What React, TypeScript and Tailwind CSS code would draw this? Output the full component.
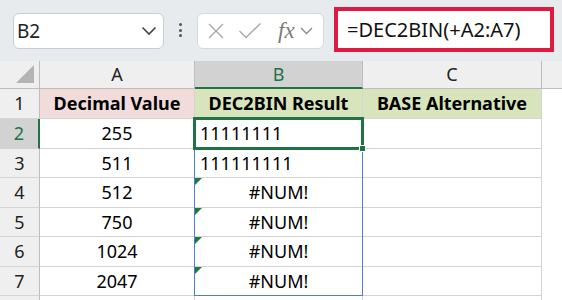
import React from "react";

function Corner() {
  return (
    <div className="relative bg-[#efefef] border-r border-b border-r-[#bdbdbd] border-b-[#bdbdbd]">
      <svg className="absolute right-[4px] bottom-[4px]" width="20" height="20" viewBox="0 0 20 20">
        <polygon points="19,1 19,19 1,19" fill="#b4b4b4" />
      </svg>
    </div>
  );
}

function ErrTri() {
  return (
    <svg className="absolute left-0 top-0" width="7" height="7" viewBox="0 0 7 7">
      <polygon points="0,0 7,0 0,7" fill="#1e7b3c" />
    </svg>
  );
}

export default function App() {
  const font = { fontFamily: '"Noto Sans", "Open Sans", sans-serif' };
  const rows = [
    { n: "1", a: "Decimal Value", b: "DEC2BIN Result", c: "BASE Alternative", head: true },
    { n: "2", a: "255", b: "11111111", left: true },
    { n: "3", a: "511", b: "111111111", left: true },
    { n: "4", a: "512", b: "#NUM!", err: true },
    { n: "5", a: "750", b: "#NUM!", err: true },
    { n: "6", a: "1024", b: "#NUM!", err: true },
    { n: "7", a: "2047", b: "#NUM!", err: true },
    { n: "", a: "", b: "" },
  ];
  const gl = "border-r border-b border-[#d4d4d4]";
  const rh = "flex items-center justify-center bg-[#efefef] border-r border-b border-r-[#bdbdbd] border-b-[#d4d4d4] text-[18px] text-[#222]";
  return (
    <div className="relative w-[562px] h-[300px] overflow-hidden bg-white" style={font}>
      {/* toolbar */}
      <div className="h-[61px] bg-[#e8ebee] flex items-start">
        <div className="ml-[13px] mt-[13px] w-[151px] h-[36px] bg-white border border-[#c9ccd0] rounded-[6px] flex items-center pl-[3px] pr-[6px]">
          <span className="text-[19px] text-[#222] leading-none">B2</span>
          <svg className="ml-auto" width="16" height="10" viewBox="0 0 16 10">
            <polyline points="1.5,1.5 8,8 14.5,1.5" fill="none" stroke="#444" strokeWidth="1.6" />
          </svg>
        </div>
        <div className="w-[33px] h-[61px] flex flex-col items-center justify-center gap-[2.5px] pb-[1px]">
          <div className="w-[3px] h-[3px] rounded-full bg-[#555]" />
          <div className="w-[3px] h-[3px] rounded-full bg-[#555]" />
          <div className="w-[3px] h-[3px] rounded-full bg-[#555]" />
        </div>
        <div className="mt-[13px] w-[127px] h-[36px] bg-white border border-[#d6d9dc] rounded-[6px] flex items-center">
          <svg className="ml-[9px]" width="18" height="18" viewBox="0 0 18 18">
            <path d="M2 2 L16 16 M16 2 L2 16" stroke="#a8a8a8" strokeWidth="1.4" fill="none" />
          </svg>
          <svg className="ml-[13px]" width="24" height="18" viewBox="0 0 24 18">
            <polyline points="1.5,9 8,15.5 22.5,1.5" stroke="#a8a8a8" strokeWidth="1.4" fill="none" />
          </svg>
          <span className="ml-[16px] text-[23px] italic text-[#7a7a7a] leading-none pb-[2px]" style={{ fontFamily: '"Liberation Serif", serif' }}>fx</span>
          <svg className="ml-[5px]" width="13" height="8" viewBox="0 0 13 8">
            <polyline points="1,1 6.5,6.5 12,1" fill="none" stroke="#8a8a8a" strokeWidth="1.4" />
          </svg>
        </div>
        <div className="ml-[10px] mt-[7px] w-[220px] h-[45px] bg-white border-[4px] border-[#dc1a42] flex items-center pl-[9px]">
          <span className="text-[20px] text-[#111] leading-none whitespace-nowrap">=DEC2BIN(+A2:A7)</span>
        </div>
      </div>

      {/* grid */}
      <div className="grid grid-cols-[40px_155px_168px_179px_1fr] grid-rows-[28px_30px_30px_29px_30px_29px_30px_29px_30px]">
        <Corner />
        <div className="flex items-center justify-center bg-[#efefef] border-r border-b border-r-[#bdbdbd] border-b-[#bdbdbd] text-[18px] text-[#222]">A</div>
        <div className="flex items-center justify-center bg-[#d2d2d2] border-r border-b-2 border-r-[#bdbdbd] border-b-[#217346] text-[18px] text-[#217346]">B</div>
        <div className="flex items-center justify-center bg-[#efefef] border-r border-b border-r-[#bdbdbd] border-b-[#bdbdbd] text-[18px] text-[#222]">C</div>
        <div className="bg-[#efefef] border-b border-b-[#bdbdbd]" />

        {rows.map((r, i) => {
          const sel = r.n === "2";
          return (
            <React.Fragment key={i}>
              <div
                className={
                  sel
                    ? "flex items-center justify-center bg-[#d2d2d2] border-r-2 border-b border-r-[#217346] border-b-[#d4d4d4] text-[18px] text-[#217346]"
                    : rh
                }
              >
                {r.n}
              </div>
              <div className={`${gl} flex items-center justify-center text-[18px] text-black ${r.head ? "bg-[#f2dcdb] font-bold" : ""}`}>
                {r.a}
              </div>
              <div
                className={`${gl} relative flex items-center text-[18px] text-black ${r.head ? "bg-[#d8e4bc] font-bold justify-center" : r.left ? "justify-start pl-[5px]" : "justify-center"}`}
              >
                {r.err && <ErrTri />}
                {r.b}
              </div>
              <div className={`${gl} flex items-center justify-center text-[18px] text-black ${r.head ? "bg-[#d8e4bc] font-bold" : ""}`}>
                {r.head ? r.c : ""}
              </div>
              <div />
            </React.Fragment>
          );
        })}
      </div>

      {/* spill range border */}
      <div className="absolute left-[194px] top-[148px] w-[169px] h-[148px] border border-[#4a7ed4] pointer-events-none" />
      {/* active cell */}
      <div className="absolute left-[193px] top-[117px] w-[171px] h-[33px] border-[3px] border-[#217346] pointer-events-none" />
      <div className="absolute left-[359px] top-[145px] w-[7px] h-[7px] bg-[#217346] border border-white pointer-events-none" />
    </div>
  );
}
